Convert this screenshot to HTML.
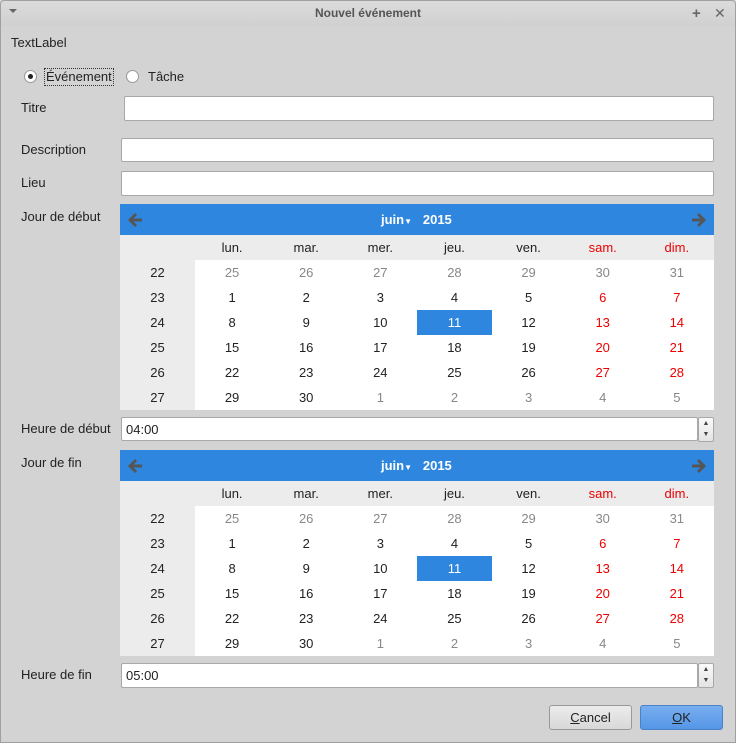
<!DOCTYPE html>
<html><head><meta charset="utf-8"><style>
*{box-sizing:border-box;margin:0;padding:0}
body{width:736px;height:743px;background:#d3d3d3;font-family:"Liberation Sans","DejaVu Sans",sans-serif;font-size:13px;color:#222;position:relative;overflow:hidden}
.bd{position:absolute;left:0;top:0;width:736px;height:743px;border:1px solid #a0a0a0;border-radius:4px 4px 0 0;pointer-events:none}
.tb{position:absolute;left:0;top:0;width:736px;height:26px;background:linear-gradient(#dcdcdc,#d0d0d0);text-align:center;line-height:26px;font-weight:bold;font-size:12px;color:#555}
.a{position:absolute}
.inp{position:absolute;background:#fff;border:1px solid #a8a8a8;border-radius:2px;height:25px;line-height:23px;padding-left:4px}
.cal{position:absolute;left:120px;width:594px;background:#fff}
.hd{height:31px;background:#2e86de;position:relative;color:#fff;font-weight:bold}
.wd,.rw{display:grid;grid-template-columns:75px repeat(7,74.14px);text-align:center}
.wd{height:25px;line-height:25px;background:#ececec}
.rw{height:25px;line-height:25px}
.rw div:first-child{background:#ececec}
.g{color:#888}.r{color:#e00}
.sel{background:#2e86de;color:#fff}
.spin{position:absolute;left:698px;width:16px;height:25px;border:1px solid #a8a8a8;border-radius:2px;background:linear-gradient(#fafafa,#e4e4e4);font-size:7px;text-align:center;line-height:11px;color:#444}
.btn{position:absolute;top:705px;width:83px;height:25px;border:1px solid #999;border-radius:3px;text-align:center;line-height:23px}
</style></head><body>
<div class="tb">Nouvel événement</div>
<div class="a" style="left:9px;top:9px;width:0;height:0;border-left:4px solid transparent;border-right:4px solid transparent;border-top:4px solid #666"></div>
<div class="a" style="left:692px;top:5px;color:#666;font-size:15px;font-weight:bold">+</div>
<div class="a" style="left:714px;top:5px;color:#666;font-size:14px;font-weight:bold">✕</div>
<div class="a" style="left:11px;top:35px">TextLabel</div>
<div class="a" style="left:24px;top:70px;width:13px;height:13px;border:1px solid #999;border-radius:50%;background:#fff"><div style="position:absolute;left:3px;top:3px;width:5px;height:5px;border-radius:50%;background:#222"></div></div>
<div class="a" style="left:44px;top:68px;border:1px dotted #333;padding:0 1px;line-height:16px">Événement</div>
<div class="a" style="left:126px;top:70px;width:13px;height:13px;border:1px solid #999;border-radius:50%;background:#fff"></div>
<div class="a" style="left:148px;top:69px">Tâche</div>
<div class="a" style="left:21px;top:100px">Titre</div>
<div class="inp" style="left:124px;top:96px;width:590px"></div>
<div class="a" style="left:21px;top:142px">Description</div>
<div class="inp" style="left:121px;top:138px;width:593px;height:24px"></div>
<div class="a" style="left:21px;top:175px">Lieu</div>
<div class="inp" style="left:121px;top:171px;width:593px"></div>
<div class="a" style="left:21px;top:209px">Jour de début</div>
<div class="cal" style="top:204px">
<div class="hd"><svg class="a" style="left:6px;top:7px" width="18" height="18" viewBox="0 0 18 18"><path d="M9 2 L2 9 L9 16 L11 14 L7.5 10.5 H16 V7.5 H7.5 L11 4 Z" fill="#555"/></svg><span class="a" style="left:261px;top:8px">juin<span style="font-size:8px">▼</span>&nbsp;&nbsp; 2015</span><svg class="a" style="right:6px;top:7px" width="18" height="18" viewBox="0 0 18 18"><path d="M9 2 L16 9 L9 16 L7 14 L10.5 10.5 H2 V7.5 H10.5 L7 4 Z" fill="#555"/></svg></div>
<div class="wd"><div></div><div>lun.</div><div>mar.</div><div>mer.</div><div>jeu.</div><div>ven.</div><div class="r">sam.</div><div class="r">dim.</div></div>
<div class="rw"><div>22</div><div class="g">25</div><div class="g">26</div><div class="g">27</div><div class="g">28</div><div class="g">29</div><div class="g">30</div><div class="g">31</div></div>
<div class="rw"><div>23</div><div>1</div><div>2</div><div>3</div><div>4</div><div>5</div><div class="r">6</div><div class="r">7</div></div>
<div class="rw"><div>24</div><div>8</div><div>9</div><div>10</div><div class="sel">11</div><div>12</div><div class="r">13</div><div class="r">14</div></div>
<div class="rw"><div>25</div><div>15</div><div>16</div><div>17</div><div>18</div><div>19</div><div class="r">20</div><div class="r">21</div></div>
<div class="rw"><div>26</div><div>22</div><div>23</div><div>24</div><div>25</div><div>26</div><div class="r">27</div><div class="r">28</div></div>
<div class="rw"><div>27</div><div>29</div><div>30</div><div class="g">1</div><div class="g">2</div><div class="g">3</div><div class="g">4</div><div class="g">5</div></div>
</div>
<div class="a" style="left:21px;top:421px">Heure de début</div>
<div class="inp" style="left:121px;top:417px;width:577px;height:24px">04:00</div>
<div class="spin" style="top:417px">▲<br>▼</div>
<div class="a" style="left:21px;top:455px">Jour de fin</div>
<div class="cal" style="top:450px">
<div class="hd"><svg class="a" style="left:6px;top:7px" width="18" height="18" viewBox="0 0 18 18"><path d="M9 2 L2 9 L9 16 L11 14 L7.5 10.5 H16 V7.5 H7.5 L11 4 Z" fill="#555"/></svg><span class="a" style="left:261px;top:8px">juin<span style="font-size:8px">▼</span>&nbsp;&nbsp; 2015</span><svg class="a" style="right:6px;top:7px" width="18" height="18" viewBox="0 0 18 18"><path d="M9 2 L16 9 L9 16 L7 14 L10.5 10.5 H2 V7.5 H10.5 L7 4 Z" fill="#555"/></svg></div>
<div class="wd"><div></div><div>lun.</div><div>mar.</div><div>mer.</div><div>jeu.</div><div>ven.</div><div class="r">sam.</div><div class="r">dim.</div></div>
<div class="rw"><div>22</div><div class="g">25</div><div class="g">26</div><div class="g">27</div><div class="g">28</div><div class="g">29</div><div class="g">30</div><div class="g">31</div></div>
<div class="rw"><div>23</div><div>1</div><div>2</div><div>3</div><div>4</div><div>5</div><div class="r">6</div><div class="r">7</div></div>
<div class="rw"><div>24</div><div>8</div><div>9</div><div>10</div><div class="sel">11</div><div>12</div><div class="r">13</div><div class="r">14</div></div>
<div class="rw"><div>25</div><div>15</div><div>16</div><div>17</div><div>18</div><div>19</div><div class="r">20</div><div class="r">21</div></div>
<div class="rw"><div>26</div><div>22</div><div>23</div><div>24</div><div>25</div><div>26</div><div class="r">27</div><div class="r">28</div></div>
<div class="rw"><div>27</div><div>29</div><div>30</div><div class="g">1</div><div class="g">2</div><div class="g">3</div><div class="g">4</div><div class="g">5</div></div>
</div>
<div class="a" style="left:21px;top:667px">Heure de fin</div>
<div class="inp" style="left:121px;top:663px;width:577px">05:00</div>
<div class="spin" style="top:663px">▲<br>▼</div>
<div class="btn" style="left:549px;background:linear-gradient(#ececec,#d8d8d8)"><u>C</u>ancel</div>
<div class="btn" style="left:640px;background:linear-gradient(#78aef0,#5596e6);border-color:#4a82c8"><u>O</u>K</div>
<div class="bd"></div>
</body></html>
